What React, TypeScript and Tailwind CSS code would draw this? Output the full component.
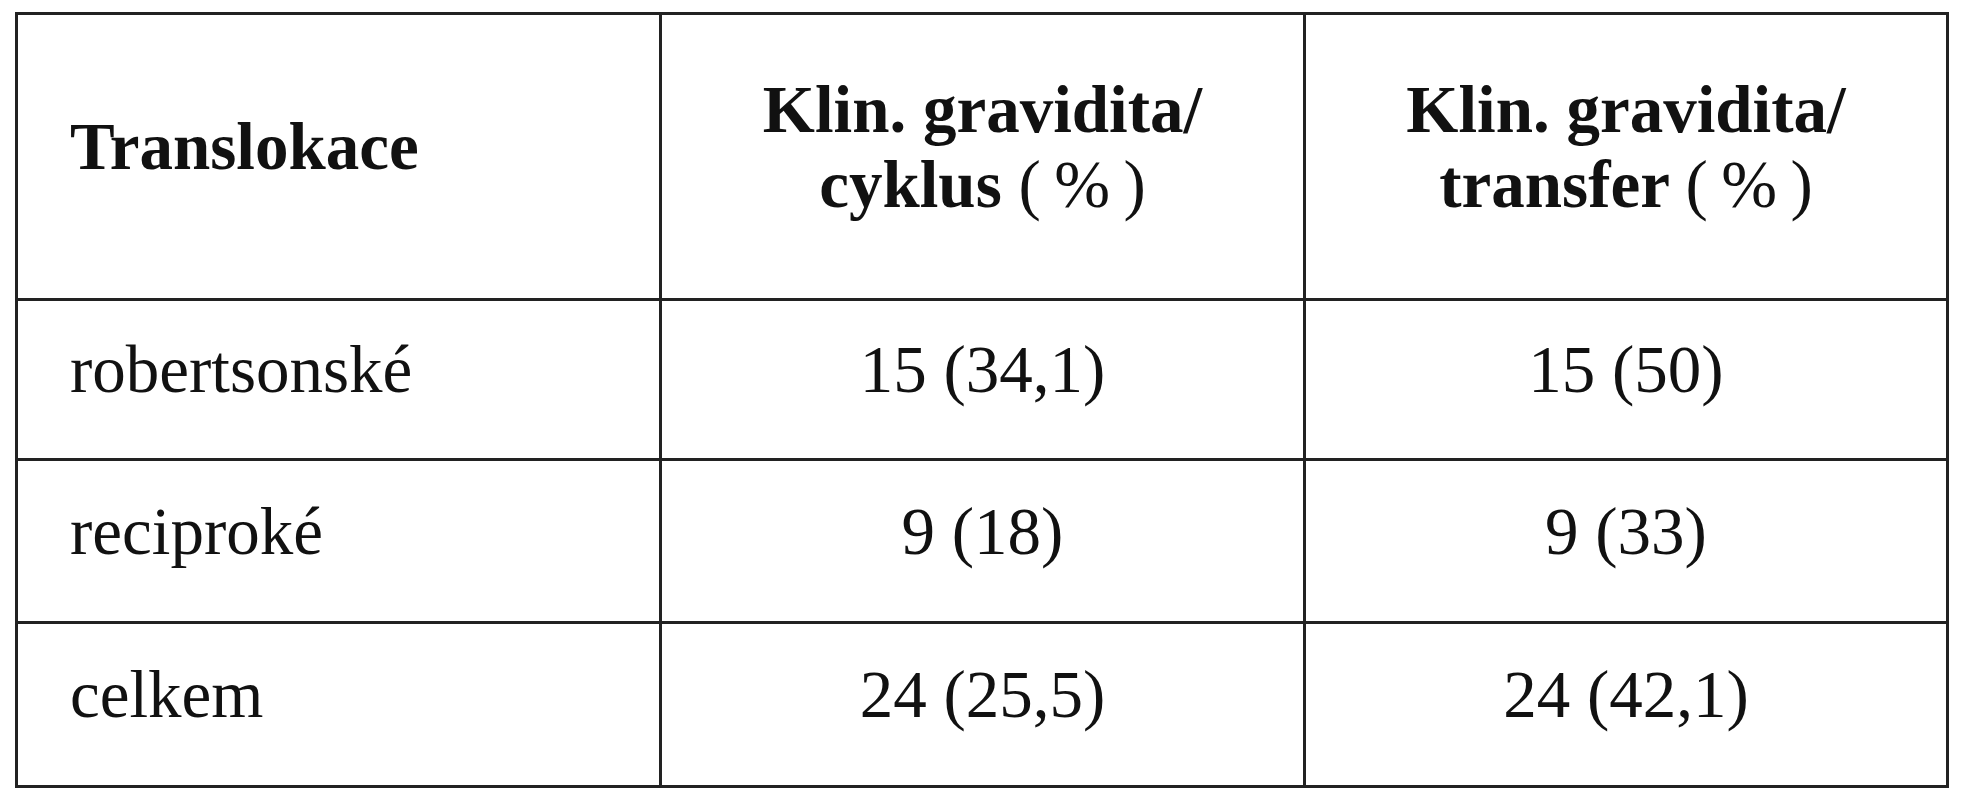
import React from "react";

const serif = { fontFamily: '"Liberation Serif", "Times New Roman", serif' };

function Cell({
  children,
  align = "center",
  bold = false,
}: {
  children: React.ReactNode;
  align?: "left" | "center";
  bold?: boolean;
}) {
  return (
    <div
      className={
        "bg-white flex items-center pb-[20px] text-[67px] leading-[75px] text-[#111] " +
        (align === "left" ? "justify-start pl-[52px] " : "justify-center text-center ") +
        (bold ? "font-bold" : "font-normal")
      }
    >
      <div>{children}</div>
    </div>
  );
}

export default function App() {
  const rows: [string, string, string][] = [
    ["robertsonské", "15 (34,1)", "15 (50)"],
    ["reciproké", "9 (18)", "9 (33)"],
    ["celkem", "24 (25,5)", "24 (42,1)"],
  ];
  return (
    <div className="w-[1965px] h-[800px] bg-white pt-[12px] pl-[15px]" style={serif}>
      <div className="grid grid-cols-[641px_641px_640px] grid-rows-[283px_157px_160px_161px] gap-[3px] p-[3px] bg-[#222] w-[1934px]">
        <Cell align="left" bold>
          Translokace
        </Cell>
        <Cell bold>
          Klin. gravidita/
          <br />
          cyklus <span className="font-normal">(&thinsp;%&thinsp;)</span>
        </Cell>
        <Cell bold>
          Klin. gravidita/
          <br />
          transfer <span className="font-normal">(&thinsp;%&thinsp;)</span>
        </Cell>
        {rows.map((r) => (
          <React.Fragment key={r[0]}>
            <Cell align="left">{r[0]}</Cell>
            <Cell>{r[1]}</Cell>
            <Cell>{r[2]}</Cell>
          </React.Fragment>
        ))}
      </div>
    </div>
  );
}
